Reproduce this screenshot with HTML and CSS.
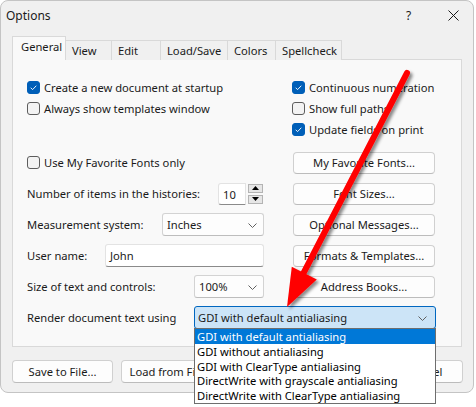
FILE: index.html
```html
<!doctype html>
<html lang="en">
<head>
    <meta charset="UTF-8">
    <title>Options</title>
    <link rel="stylesheet" href="styles.css">
</head>
<body>
    <div class="window">
        <div class="titlebar">
            <span class="title">Options</span>
            <span class="help">?</span>
            <span class="close">
                <svg width="11" height="11" viewBox="0 0 11 11"><path d="M0.5 0.5L10.5 10.5M10.5 0.5L0.5 10.5" stroke="#1a1a1a" stroke-width="1" fill="none"/></svg>
            </span>
        </div>

        <div class="tabs">
            <div class="tab tab-active">General</div>
            <div class="tab tab-view">View</div>
            <div class="tab tab-edit">Edit</div>
            <div class="tab tab-load">Load/Save</div>
            <div class="tab tab-colors">Colors</div>
            <div class="tab tab-spell">Spellcheck</div>
        </div>

        <div class="panel">
            <div class="checks">
                <div class="check"><span class="box box-on"><svg width="13" height="13" viewBox="0 0 13 13"><path d="M3.2 6.8L5.4 9L9.8 4.4" stroke="#fff" stroke-width="1.1" fill="none"/></svg></span>Create a new document at startup</div>
                <div class="check"><span class="box box-on"><svg width="13" height="13" viewBox="0 0 13 13"><path d="M3.2 6.8L5.4 9L9.8 4.4" stroke="#fff" stroke-width="1.1" fill="none"/></svg></span>Continuous numeration</div>
                <div class="check"><span class="box"></span>Always show templates window</div>
                <div class="check"><span class="box"></span>Show full paths</div>
                <div></div>
                <div class="check"><span class="box box-on"><svg width="13" height="13" viewBox="0 0 13 13"><path d="M3.2 6.8L5.4 9L9.8 4.4" stroke="#fff" stroke-width="1.1" fill="none"/></svg></span>Update fields on print</div>
            </div>

            <div class="row row-first">
                <div class="field">
                    <div class="check"><span class="box"></span>Use My Favorite Fonts only</div>
                </div>
                <div class="btn">My Favorite Fonts...</div>
            </div>

            <div class="row">
                <div class="field">
                    <span>Number of items in the histories:</span>
                    <div class="spin">
                        <div class="input spin-input">10</div>
                        <div class="spin-btns">
                            <span class="spin-btn"><svg width="7" height="4" viewBox="0 0 7 4"><path d="M0 4L3.5 0L7 4Z" fill="#000"/></svg></span>
                            <span class="spin-btn"><svg width="7" height="4" viewBox="0 0 7 4"><path d="M0 0L3.5 4L7 0Z" fill="#000"/></svg></span>
                        </div>
                    </div>
                </div>
                <div class="btn">Font Sizes...</div>
            </div>

            <div class="row">
                <div class="field">
                    <span>Measurement system:</span>
                    <div class="select select-units">Inches
                        <svg class="chev" width="9" height="5" viewBox="0 0 9 5"><path d="M0.5 0.5L4.5 4.5L8.5 0.5" stroke="#606060" fill="none"/></svg>
                    </div>
                </div>
                <div class="btn">Optional Messages...</div>
            </div>

            <div class="row">
                <div class="field">
                    <span>User name:</span>
                    <div class="input input-user">John</div>
                </div>
                <div class="btn">Formats &amp; Templates...</div>
            </div>

            <div class="row">
                <div class="field">
                    <span>Size of text and controls:</span>
                    <div class="select select-size">100%
                        <svg class="chev" width="9" height="5" viewBox="0 0 9 5"><path d="M0.5 0.5L4.5 4.5L8.5 0.5" stroke="#606060" fill="none"/></svg>
                    </div>
                </div>
                <div class="btn">Address Books...</div>
            </div>

            <div class="row row-render">
                <span class="render-label">Render document text using</span>
                <div class="select select-render">GDI with default antialiasing
                    <svg class="chev" width="9" height="5" viewBox="0 0 9 5"><path d="M0.5 0.5L4.5 4.5L8.5 0.5" stroke="#606060" fill="none"/></svg>
                    <ul class="dropdown">
                        <li class="dropdown-sel">GDI with default antialiasing</li>
                        <li>GDI without antialiasing</li>
                        <li>GDI with ClearType antialiasing</li>
                        <li>DirectWrite with grayscale antialiasing</li>
                        <li>DirectWrite with ClearType antialiasing</li>
                    </ul>
                </div>
            </div>
        </div>

        <div class="footer">
            <div class="btn btn-wide">Save to File...</div>
            <div class="btn btn-wide">Load from File...</div>
            <div class="footer-right">
                <div class="btn btn-small">OK</div>
                <div class="btn btn-small">Cancel</div>
            </div>
        </div>
    </div>

    <!-- red annotation arrow -->
    <svg class="arrow" width="476" height="407" viewBox="0 0 476 407">
        <defs>
            <filter id="shadow" x="-20%" y="-20%" width="140%" height="140%">
                <feDropShadow dx="2.5" dy="2.5" stdDeviation="1.6" flood-color="#000" flood-opacity="0.45"/>
            </filter>
        </defs>
        <g filter="url(#shadow)">
            <path d="M407 73L302 276" stroke="#ff0000" stroke-width="6" stroke-linecap="round" fill="none"/>
            <path d="M291.8 266.7L316.8 279.5L287 307Z" fill="#ff0000"/>
        </g>
    </svg>
</body>
</html>
```

FILE: styles.css
```css
* {
    box-sizing: border-box;
}
html, body {
    height: 407px;
}
body {
    margin: 0;
    background: #fff;
    font-family: "Noto Sans", "Open Sans", sans-serif;
    font-size: 11.2px;
    color: #1a1a1a;
    position: relative;
}
.window {
    position: relative;
    width: 474px;
    height: 393px;
    background: #f0f0f0;
    border: 1px solid #c4c4c4;
    border-radius: 8px;
}
.titlebar {
    display: flex;
    align-items: center;
    height: 29px;
    padding-left: 5px;
}
.title {
    font-size: 12px;
    flex: 1;
}
.help {
    font-size: 12px;
    width: 42px;
}
.close {
    display: flex;
    width: 25px;
}

/* tabs */
.tabs {
    display: flex;
    align-items: flex-end;
    height: 29px;
    padding-left: 11px;
}
.tab {
    height: 20px;
    line-height: 19px;
    padding-left: 6px;
    border: 1px solid #d9d9d9;
    border-bottom: none;
    border-left: none;
    background: #f0f0f0;
    margin-bottom: -1px;
}
.tab-active {
    height: 24px;
    line-height: 20px;
    padding-left: 8px;
    width: 54px;
    border-left: 1px solid #d9d9d9;
    background: #f9f9f9;
    position: relative;
    z-index: 1;
}
.tab-view { width: 46px; }
.tab-edit { width: 49px; }
.tab-load { width: 67px; }
.tab-colors { width: 48px; }
.tab-spell { width: 66px; }

.panel {
    margin: 0 11px;
    height: 288px;
    background: #f9f9f9;
    border: 1px solid #d9d9d9;
    padding: 17px 0 0 14px;
}

/* checkboxes */
.checks {
    display: grid;
    grid-template-columns: 265px 1fr;
    grid-auto-rows: 21px;
    align-items: center;
}
.check {
    display: flex;
    align-items: center;
}
.box {
    width: 13px;
    height: 13px;
    margin-right: 4px;
    border: 1px solid #5d5d5d;
    border-radius: 3px;
    background: #f3f3f3;
    display: flex;
    align-items: center;
    justify-content: center;
}
.box-on {
    background: #005fb8;
    border-color: #005fb8;
}

/* rows */
.row {
    display: grid;
    grid-template-columns: 237px 142px;
    column-gap: 29px;
    align-items: center;
    height: 23px;
    margin-top: 8px;
}
.row-first {
    margin-top: 11px;
}
.field {
    display: flex;
    align-items: center;
    height: 23px;
}
.field > span {
    flex: 1;
}
.input, .select {
    height: 23px;
    line-height: 21px;
    padding-left: 4px;
    background: #fff;
    border: 1px solid #e3e3e3;
    border-bottom-color: #8a8a8a;
    border-radius: 3px;
}
.select {
    position: relative;
    background: #fdfdfd;
    border-color: #d3d3d3;
    border-bottom-color: #bdbdbd;
}
.chev {
    position: absolute;
    right: 6px;
    top: 9px;
}
.select-units { width: 102px; }
.select-size { width: 70px; }
.input-user { width: 159px; }

.spin {
    display: flex;
    align-items: center;
    margin-right: 1px;
}
.spin-input {
    width: 28px;
    height: 22px;
    border-top-right-radius: 0;
    border-bottom-right-radius: 0;
}
.spin-btns {
    display: flex;
    flex-direction: column;
    gap: 2px;
    margin-left: 2px;
}
.spin-btn {
    width: 15px;
    height: 9px;
    border: 1px solid #b4b4b4;
    background: #e6e6e6;
    display: flex;
    align-items: center;
    justify-content: center;
}

.btn {
    height: 22px;
    line-height: 20px;
    text-align: center;
    background: #fdfdfd;
    border: 1px solid #d0d0d0;
    border-bottom-color: #bcbcbc;
    border-radius: 4px;
}

.row-render {
    display: flex;
    column-gap: 0;
}
.render-label {
    width: 167px;
    flex: none;
}
.select-render {
    width: 242px;
    flex: none;
    background: #cce4f7;
    border: 1px solid #0067c0;
    padding-left: 3px;
}
.select-render .chev {
    right: 8px;
}
.dropdown {
    position: absolute;
    left: -1px;
    top: 21px;
    width: 242px;
    margin: 0;
    padding: 0;
    list-style: none;
    background: #fff;
    border: 1px solid #6e6e6e;
    z-index: 5;
}
.dropdown li {
    height: 14.8px;
    line-height: 15.5px;
    padding-left: 2px;
    color: #000;
}
.dropdown .dropdown-sel {
    background: #0078d7;
    color: #fff;
}

/* bottom buttons */
.footer {
    display: flex;
    gap: 8px;
    margin-top: 13px;
    padding: 0 10px 0 11px;
}
.footer .btn {
    height: 23px;
    line-height: 21px;
}
.btn-wide {
    width: 101px;
}
.footer-right {
    display: flex;
    gap: 8px;
    margin-left: auto;
}
.btn-small {
    width: 76px;
}

.arrow {
    position: absolute;
    left: 0;
    top: 0;
    pointer-events: none;
    z-index: 10;
}
```
